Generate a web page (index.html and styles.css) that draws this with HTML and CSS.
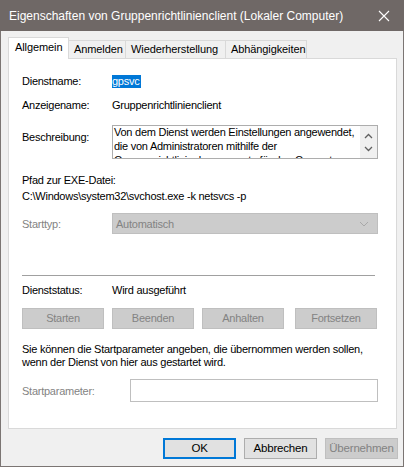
FILE: index.html
```html
<!DOCTYPE html>
<html lang="de">
<head>
<meta charset="utf-8">
<title>Eigenschaften von Gruppenrichtlinienclient</title>
<link rel="stylesheet" href="styles.css">
</head>
<body>
<div class="window">
  <div class="titlebar">
    <span class="title">Eigenschaften von Gruppenrichtlinienclient (Lokaler Computer)</span>
    <svg class="close" width="12" height="12" viewBox="0 0 12 12"><path d="M1 1L11 11M11 1L1 11" stroke="#fff" stroke-width="1.1" fill="none"/></svg>
  </div>
  <div class="body">
    <div class="tabs">
      <div class="tab active">Allgemein</div>
      <div class="tab">Anmelden</div>
      <div class="tab">Wiederherstellung</div>
      <div class="tab">Abhängigkeiten</div>
    </div>
    <div class="panel">
      <div class="row r-name">
        <span class="label">Dienstname:</span>
        <span class="value"><span class="sel">gpsvc</span></span>
      </div>
      <div class="row r-display">
        <span class="label">Anzeigename:</span>
        <span class="value">Gruppenrichtlinienclient</span>
      </div>
      <div class="row r-desc">
        <span class="label desc-label">Beschreibung:</span>
        <div class="textbox">
          <div class="textbox-text">Von dem Dienst werden Einstellungen angewendet, die von Administratoren mithilfe der Gruppenrichtlinienkomponente für den Computer und die Benutzer konfiguriert wurden.</div>
          <div class="scroll">
            <svg width="9" height="6" viewBox="0 0 9 6"><path d="M1 5L4.5 1.5L8 5" stroke="#606060" stroke-width="1.3" fill="none"/></svg>
            <svg width="9" height="6" viewBox="0 0 9 6"><path d="M1 1L4.5 4.5L8 1" stroke="#606060" stroke-width="1.3" fill="none"/></svg>
          </div>
        </div>
      </div>
      <div class="line r-path-label">Pfad zur EXE-Datei:</div>
      <div class="line r-path">C:\Windows\system32\svchost.exe -k netsvcs -p</div>
      <div class="row r-start">
        <span class="label disabled">Starttyp:</span>
        <div class="combo">
          <span>Automatisch</span>
          <svg width="10" height="6" viewBox="0 0 10 6"><path d="M1 1L5 5L9 1" stroke="#a8a8a8" stroke-width="1" fill="none"/></svg>
        </div>
      </div>
      <div class="separator"></div>
      <div class="row r-status">
        <span class="label">Dienststatus:</span>
        <span class="value">Wird ausgeführt</span>
      </div>
      <div class="buttons">
        <div class="btn disabled-btn">Starten</div>
        <div class="btn disabled-btn">Beenden</div>
        <div class="btn disabled-btn">Anhalten</div>
        <div class="btn disabled-btn last">Fortsetzen</div>
      </div>
      <div class="para">Sie können die Startparameter angeben, die übernommen werden sollen,<br>wenn der Dienst von hier aus gestartet wird.</div>
      <div class="row r-param">
        <span class="label disabled param-label">Startparameter:</span>
        <div class="input"></div>
      </div>
    </div>
    <div class="footer">
      <div class="fbtn ok">OK</div>
      <div class="fbtn">Abbrechen</div>
      <div class="fbtn fdisabled">Übernehmen</div>
    </div>
  </div>
</div>
</body>
</html>
```

FILE: styles.css
```css
html, body {
  margin: 0;
  padding: 0;
  background: #ffffff;
}
body {
  font-family: "Liberation Sans", Arial, sans-serif;
  font-size: 11px;
  color: #000;
}
.window {
  width: 402px;
  height: 466px;
  border: 1px solid #7b7573;
  border-top: none;
  background: #f0f0f0;
  display: flex;
  flex-direction: column;
}
.titlebar {
  height: 31px;
  background: #6f6866;
  display: flex;
  align-items: center;
  justify-content: space-between;
  padding: 0 9px 0 9px;
  margin: 0 -1px;
  color: #fff;
  font-size: 12px;
}
.title {
  padding-top: 1px;
}
.close {
  margin-right: 5px;
}
.body {
  padding: 7px 0 0 7px;
}
.tabs {
  display: flex;
  align-items: flex-end;
  height: 20px;
}
.tab {
  height: 17px;
  line-height: 17px;
  border: 1px solid #d9d9d9;
  border-bottom: none;
  border-left: none;
  background: #f0f0f0;
  padding: 0 5px;
  font-size: 11px;
  letter-spacing: -0.1px;
}
.tab.active {
  height: 21px;
  line-height: 18px;
  background: #fff;
  border-left: 1px solid #d9d9d9;
  width: 48px;
  padding: 0 5px 0 6px;
  margin-bottom: -1px;
  position: relative;
  z-index: 1;
}
.tab:nth-child(2) { width: 46px; }
.tab:nth-child(3) { width: 89px; }
.tab:nth-child(4) { width: 70px; }
.panel {
  height: 369px;
  border: 1px solid #d9d9d9;
  background: #fff;
  padding-left: 13px;
  box-sizing: content-box;
  width: 374px;
  display: flex;
  flex-direction: column;
  letter-spacing: -0.25px;
}
.row {
  display: flex;
  align-items: flex-start;
}
.label {
  width: 90px;
  line-height: 14px;
}
.value {
  line-height: 14px;
}
.sel {
  background: #0078d7;
  color: #fff;
  display: inline-block;
  padding: 0 1px 0 0;
  line-height: 13px;
}
.r-name { margin-top: 15px; height: 14px; }
.r-display { margin-top: 10px; height: 14px; }
.r-desc { margin-top: 13px; }
.desc-label { margin-top: 5px; }
.textbox {
  width: 264px;
  height: 32px;
  border: 1px solid #adadad;
  display: flex;
  overflow: hidden;
}
.textbox-text {
  flex: 1;
  padding: 0 0 0 1px;
  margin-top: -1px;
  line-height: 14px;
  overflow: hidden;
}
.scroll {
  width: 17px;
  flex-shrink: 0;
  background: #f0f0f0;
  display: flex;
  flex-direction: column;
  align-items: center;
  justify-content: space-around;
  padding: 3px 0;
}
.line {
  line-height: 14px;
}
.r-path-label { margin-top: 14px; }
.r-path { margin-top: 2px; }
.r-start { margin-top: 10px; align-items: center; }
.combo {
  width: 253px;
  height: 19px;
  border: 1px solid #bfbfbf;
  background: #cccccc;
  color: #838383;
  display: flex;
  align-items: center;
  justify-content: space-between;
  padding: 0 8px 0 3px;
}
.disabled { color: #838383; }
.separator {
  margin-top: 41px;
  width: 353px;
  height: 1px;
  background: #a0a0a0;
}
.r-status { margin-top: 7px; height: 14px; }
.buttons {
  margin-top: 11px;
  display: flex;
}
.btn {
  width: 80px;
  height: 19px;
  line-height: 19px;
  text-align: center;
  margin-right: 8px;
}
.btn.last { margin-left: 3px; margin-right: 0; }
.disabled-btn {
  background: #cccccc;
  border: 1px solid #bfbfbf;
  color: #838383;
}
.para {
  margin-top: 14px;
  line-height: 13px;
}
.r-param { margin-top: 10px; align-items: center; }
.param-label { width: 108px; }
.input {
  width: 246px;
  height: 21px;
  border: 1px solid #bfbfbf;
  background: #fff;
}
.footer {
  margin-top: 9px;
  display: flex;
  justify-content: flex-end;
  padding-right: 5px;
  gap: 8px;
}
.fbtn {
  width: 71px;
  height: 19px;
  line-height: 19px;
  text-align: center;
  background: #e1e1e1;
  border: 1px solid #adadad;
  font-size: 11.5px;
  letter-spacing: -0.2px;
}
.fbtn.ok {
  border: 2px solid #0078d7;
  width: 69px;
  height: 17px;
  line-height: 17px;
}
.fdisabled {
  background: #cccccc;
  border-color: #bfbfbf;
  color: #838383;
}
```
